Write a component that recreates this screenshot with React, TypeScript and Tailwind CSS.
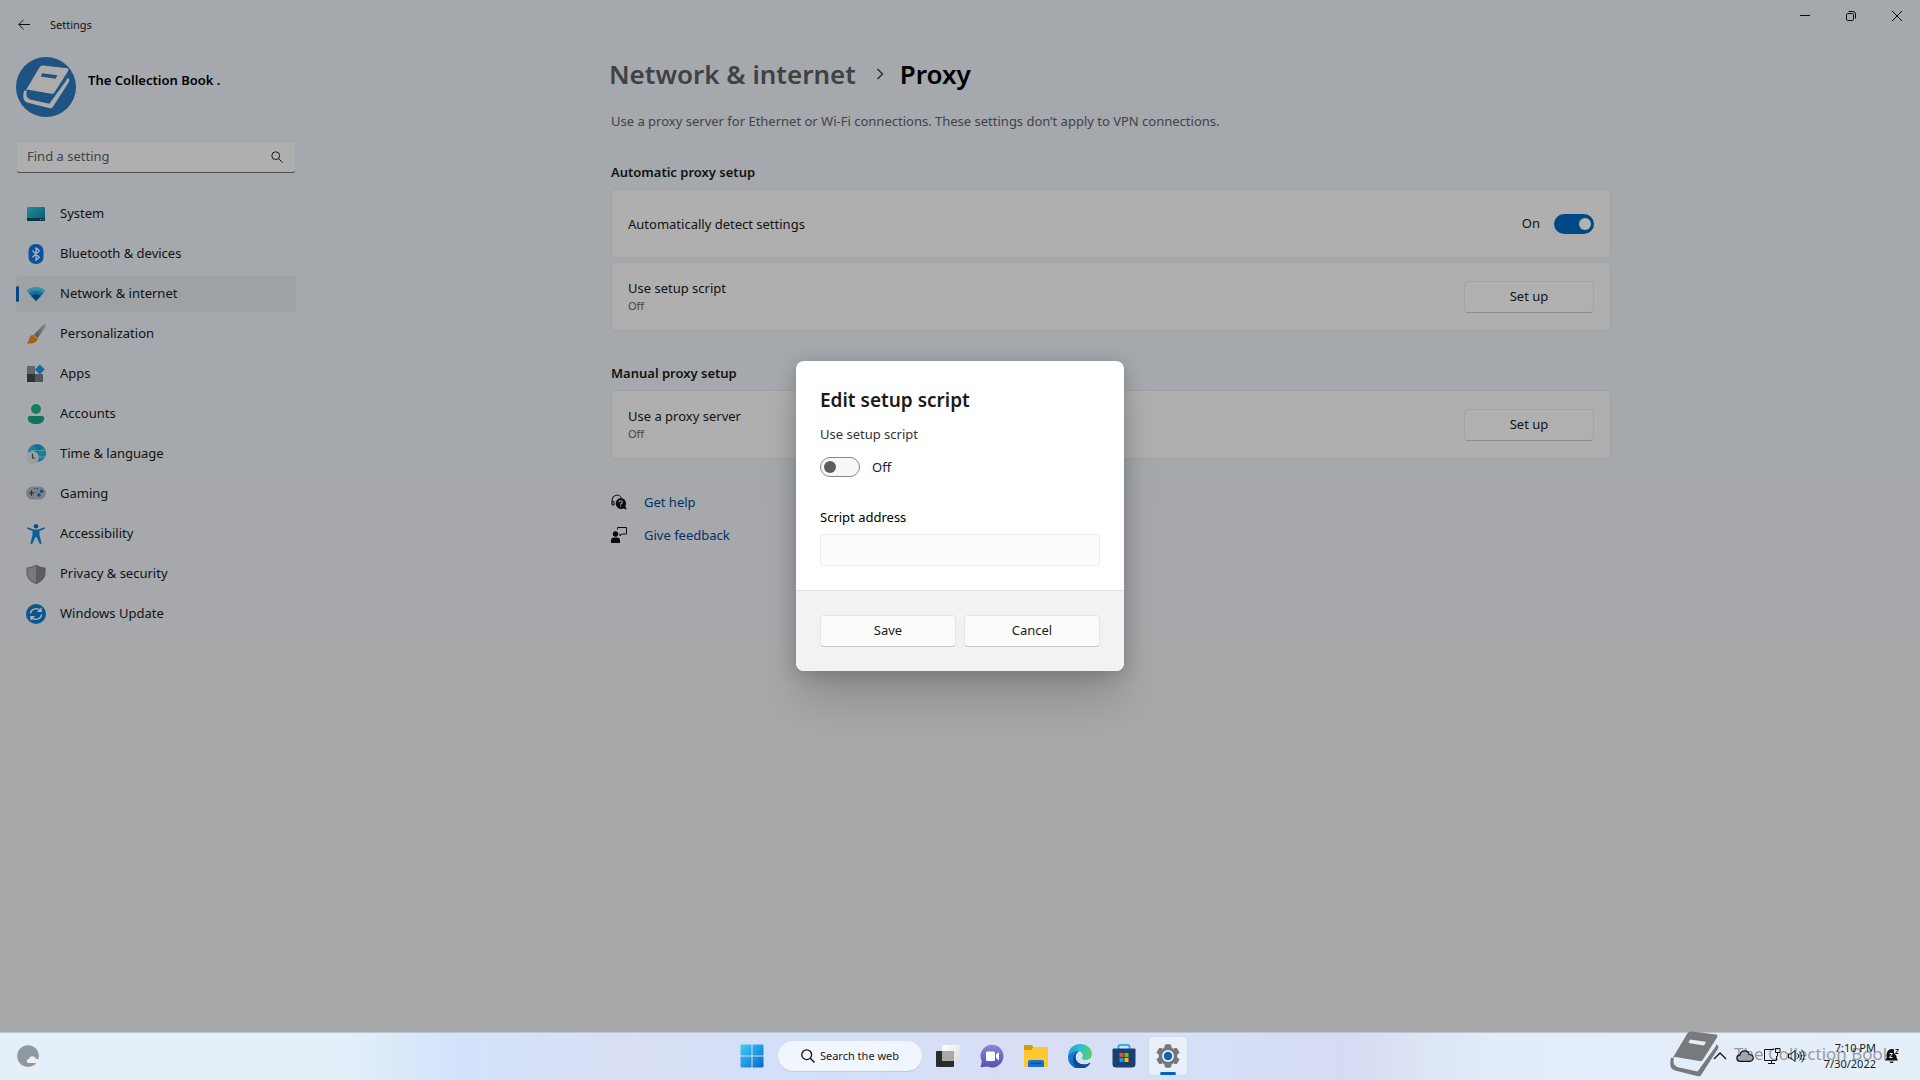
import { useState } from "react";
import type { ReactNode } from "react";

const SystemIcon = () => (
  <svg viewBox="0 0 20 20" className="size-5">
    <defs>
      <linearGradient id="sys" x1="0" y1="0" x2="1" y2="1">
        <stop offset="0" stopColor="#35c8dc" />
        <stop offset="1" stopColor="#0d7f9c" />
      </linearGradient>
    </defs>
    <rect x="1" y="3" width="18" height="14" rx="1.2" fill="url(#sys)" />
    <path d="M1 14h18v1.800a1.200 1.200 0 0 1-1.200 1.200H2.200A1.200 1.200 0 0 1 1 15.800z" fill="#0a4c68" />
    <path d="M14 15.500h1M16.500 15.500h1" stroke="#bfe8f2" strokeWidth="0.9" />
  </svg>
);

const BluetoothIcon = () => (
  <svg viewBox="0 0 20 20" className="size-5">
    <rect x="2.500" y="0" width="15" height="20" rx="7" fill="#0a78e6" />
    <path
      d="M6.300 6.600l7 6.600L10 16.200V3.800l3.300 3L6.300 13.400"
      fill="none"
      stroke="#fff"
      strokeWidth="1.300"
      strokeLinejoin="round"
    />
  </svg>
);

const NetworkIcon = () => (
  <svg viewBox="0 0 20 20" className="size-5">
    <path d="M0.300 6.800C5.800 1.700 14.200 1.700 19.700 6.800L10 17z" fill="#4cd0f0" />
    <path d="M2.800 9.400c4.100-3.800 10.300-3.800 14.400 0L10 17z" fill="#1a9fe0" />
    <path d="M5.300 12c2.700-2.400 6.700-2.400 9.400 0L10 17z" fill="#0a5ca8" />
  </svg>
);

const BrushIcon = () => (
  <svg viewBox="0 0 20 20" className="size-5">
    <defs>
      <linearGradient id="handle" x1="1" y1="0" x2="0" y2="1">
        <stop offset="0" stopColor="#c9ccd2" />
        <stop offset="1" stopColor="#6c7078" />
      </linearGradient>
    </defs>
    <path d="M19.600.4c.7.700.4 1.800-.2 2.800L11.600 14 8 10.800 17 .8c.9-.9 2-1 2.600-.4z" fill="url(#handle)" />
    <path d="M8 10.800l3.600 3.200c.2 3.600-4.200 6.600-10.900 5.200 2.200-1.300 1.800-3 2.800-5.400.8-2 2.700-3.200 4.500-3z" fill="#f08a1c" />
    <path d="M8 10.800l3.600 3.200-.5 1.500-4.500-4.300z" fill="#ffb84d" />
  </svg>
);

const AppsIcon = () => (
  <svg viewBox="0 0 20 20" className="size-5">
    <path d="M1 2h8v8H1z" fill="#8d9299" />
    <path d="M1 10h8v8H1z" fill="#43474d" />
    <path d="M9 10h8v8H9z" fill="#767b82" />
    <path d="M13.800.5l5 5-5 5-5-5z" fill="#1c9be0" />
  </svg>
);

const AccountsIcon = () => (
  <svg viewBox="0 0 20 20" className="size-5">
    <circle cx="10" cy="5" r="5" fill="#1db58d" />
    <path d="M4 12h12c1.400 0 2.200.8 2.200 2.200 0 3.500-3.400 5.800-8.200 5.800s-8.200-2.300-8.200-5.800C1.800 12.800 2.600 12 4 12z" fill="#17a583" />
  </svg>
);

const TimeIcon = () => (
  <svg viewBox="0 0 20 20" className="size-5">
    <circle cx="11" cy="9" r="9" fill="#1c9ed8" />
    <path d="M7 1c4 2 5 4 1 7H2.500C2 5 4 2 7 1zM12 8l5-5c3 3 4 7 1 12l-4 1z" fill="#33c3dc" opacity="0.700" />
    <path d="M5 6.500h14.500M12 13h7" stroke="#9be4f7" strokeWidth="0.700" />
    <circle cx="6.500" cy="13.500" r="6.500" fill="#e2e4e8" />
    <path d="M6.500 9.500v4.500h3" fill="none" stroke="#50545a" strokeWidth="1.200" />
  </svg>
);

const GamingIcon = () => (
  <svg viewBox="0 0 20 20" className="size-5">
    <rect x="0" y="2.500" width="20" height="13" rx="6.500" fill="#b5b9c2" />
    <path d="M5.500 6.200v5.600M2.700 9h5.600" stroke="#3b3e44" strokeWidth="1.200" />
    <circle cx="15.700" cy="7.200" r="1.700" fill="#1a6fc4" />
    <circle cx="13" cy="11" r="1.700" fill="#1a6fc4" />
    <path d="M8.300 4.500h1M11 4.500h1" stroke="#3b3e44" strokeWidth="1" />
  </svg>
);

const AccessibilityIcon = () => (
  <svg viewBox="0 0 20 20" className="size-5">
    <circle cx="10" cy="2.300" r="2.300" fill="#0b72c4" />
    <path
      d="M2.500 3.400l5 2.200h5l5-2.200c1.200-.4 1.700 1.200.7 1.700L13.500 7.300v4.200l2 7.200c.3 1.300-1.500 1.900-2 .6L10.500 13h-1l-3 6.300c-.6 1.300-2.300.7-2-.6l2-7.200V7.300L1.800 5.100c-1-.5-.5-2.100.7-1.700z"
      fill="#0f87dc"
    />
  </svg>
);

const PrivacyIcon = () => (
  <svg viewBox="0 0 20 20" className="size-5">
    <path d="M10 1c2.500 1.800 5.500 2.800 9 2.900V9c0 5-3.500 8.500-9 10.500z" fill="#82868d" />
    <path d="M10 1C7.500 2.800 4.500 3.800 1 3.900V9c0 5 3.500 8.500 9 10.500z" fill="#aaaeb5" />
    <path d="M10 1c2.500 1.800 5.500 2.800 9 2.900V9c0 5-3.500 8.500-9 10.500C4.500 17.500 1 14 1 9V3.900C4.500 3.800 7.500 2.800 10 1z" fill="none" stroke="#70747b" strokeWidth="0.900" />
  </svg>
);

const UpdateIcon = () => (
  <svg viewBox="0 0 20 20" className="size-5">
    <circle cx="10" cy="10" r="10" fill="#0c7fce" />
    <path
      d="M4.500 9.500c.5-5 7.500-6.500 10.500-2.500M15 3.800V7.200h-3.500M15.500 10.500c-.5 5-7.500 6.500-10.500 2.500M5 16.200v-3.400h3.500"
      fill="none"
      stroke="#fff"
      strokeWidth="1.400"
    />
  </svg>
);

const navItems: { label: string; icon: ReactNode }[] = [
  { label: "System", icon: <SystemIcon /> },
  { label: "Bluetooth & devices", icon: <BluetoothIcon /> },
  { label: "Network & internet", icon: <NetworkIcon /> },
  { label: "Personalization", icon: <BrushIcon /> },
  { label: "Apps", icon: <AppsIcon /> },
  { label: "Accounts", icon: <AccountsIcon /> },
  { label: "Time & language", icon: <TimeIcon /> },
  { label: "Gaming", icon: <GamingIcon /> },
  { label: "Accessibility", icon: <AccessibilityIcon /> },
  { label: "Privacy & security", icon: <PrivacyIcon /> },
  { label: "Windows Update", icon: <UpdateIcon /> },
];

const BookShape = ({ className }: { className: string }) => (
  <svg viewBox="0 0 50 46" className={className} fill="currentColor">
    <path
      fillRule="evenodd"
      d="M22.500 0.500L47 3.500c1.500.3 1.800 1.500 1 3L34 28.500c-.8 1.300-2 1.800-3.500 1.500L6.500 26c-1 0-2 .3-3 1.300L18 3C19 1 20.500.3 22.500.5zM21 8.500l-1.500 3.500 15.500 2.500 2-3.700z"
    />
    <path d="M47.500 13.500c2 1 2.500 2.500 1.300 4.500L32.500 43.500c-.8 1.500-2 2-3.500 1.800L6 39.500C1 38 .3 32.500 2.500 28.500c-.3 4 1.500 6.500 4.500 7.300l21.500 4.700L46 16.500z" />
    <path d="M3.500 27c-1.500 5 0 8.500 3.500 9.500" fill="none" stroke="currentColor" strokeWidth="3" />
  </svg>
);

const TitleBar = () => (
  <header className="flex h-[50px] items-center justify-between">
    <div className="flex items-center gap-5 pl-[18px]">
      <button type="button" aria-label="Back">
        <svg viewBox="0 0 12 12" className="size-3" fill="none" stroke="#1a1a1a">
          <path d="M12 5.500H.8M5.500.8L.8 5.500l4.700 4.700" />
        </svg>
      </button>
      <span className="text-[11px]">Settings</span>
    </div>
    <div className="flex self-start">
      <button type="button" aria-label="Minimize" className="flex h-8 w-[46px] items-center justify-center">
        <svg viewBox="0 0 10 10" className="size-[10px]" stroke="#111">
          <path d="M0 4.500h10" />
        </svg>
      </button>
      <button type="button" aria-label="Restore" className="flex h-8 w-[46px] items-center justify-center">
        <svg viewBox="0 0 10 10" className="size-[10px]" fill="none" stroke="#111">
          <rect x="0.500" y="2.500" width="7" height="7" rx="1.200" />
          <path d="M2.500.5H7A2.500 2.500 0 0 1 9.500 3v4.500" />
        </svg>
      </button>
      <button type="button" aria-label="Close" className="flex h-8 w-[46px] items-center justify-center">
        <svg viewBox="0 0 10 10" className="size-[10px]" stroke="#111">
          <path d="M0 0l10 10M10 0L0 10" />
        </svg>
      </button>
    </div>
  </header>
);

const Sidebar = () => (
  <aside className="w-[302px] shrink-0 pt-[7px] pr-1.5 pl-4">
    <div className="flex gap-3">
      <div className="flex size-[60px] items-center justify-center rounded-full bg-[#2d77bd] text-[#f7f7f7]">
        <BookShape className="h-[44px] w-[48px]" />
      </div>
      <span className="mt-[13px] text-[13px] leading-5 font-semibold text-black">The Collection Book .</span>
    </div>
    <div className="mt-6 flex h-8 items-center rounded border border-black/5 border-b-[#6b6d70] bg-[#fbfbfc] pr-3 pl-[10px]">
      <input
        type="text"
        aria-label="Find a setting"
        placeholder="Find a setting"
        className="min-w-0 flex-1 bg-transparent text-[13px] outline-none placeholder:text-[#5f6062]"
      />
      <svg viewBox="0 0 12 12" className="size-3" fill="none" stroke="#222">
        <circle cx="4.700" cy="4.700" r="3.900" />
        <path d="M7.500 7.500L11.500 11.500" />
      </svg>
    </div>
    <nav className="mt-[23px] flex flex-col gap-1">
      {navItems.map(({ label, icon }) => {
        const active = label === "Network & internet";
        return (
          <a
            key={label}
            href="#"
            aria-current={active ? "page" : undefined}
            className={`flex h-9 items-center rounded text-[13px] ${active ? "bg-black/[0.035]" : ""}`}
          >
            <span className={`h-4 w-[3px] rounded-full ${active ? "bg-[#0067c0]" : ""}`} />
            <span className="mr-[14px] ml-[7px]">{icon}</span>
            {label}
          </a>
        );
      })}
    </nav>
  </aside>
);

const Card = ({
  title,
  status,
  children,
}: {
  title: string;
  status?: string;
  children: ReactNode;
}) => (
  <div className="flex h-[69px] items-center justify-between rounded border border-black/[0.07] bg-[#fbfbfc] px-4">
    <div>
      <div className="text-[13px] leading-[18px]">{title}</div>
      {status && <div className="text-[11px] leading-[17px] text-[#5f6062]">{status}</div>}
    </div>
    {children}
  </div>
);

const SetupButton = () => (
  <button
    type="button"
    className="h-8 w-[130px] rounded border border-black/[0.07] border-b-black/20 bg-[#fdfdfe] text-[13px]"
  >
    Set up
  </button>
);

const Main = () => (
  <main className="flex-1 pt-1.5">
    <div className="mx-auto max-w-[1000px]">
      <h1 className="-ml-0.5 flex items-center text-[26px] leading-9 font-semibold">
        <span className="text-[#5c5e61]">Network &amp; internet</span>
        <svg viewBox="0 0 8 12" className="mr-4 ml-5 h-3 w-2" fill="none" stroke="#444" strokeWidth="1.500">
          <path d="M1.500 1l5 5-5 5" />
        </svg>
        <span className="text-black">Proxy</span>
      </h1>
      <p className="mt-[18px] text-[13px] leading-[22px] text-[#5f6164]">
        Use a proxy server for Ethernet or Wi-Fi connections. These settings don’t apply to VPN connections.
      </p>

      <h2 className="mt-[30px] mb-[7px] text-[13px] leading-5 font-semibold">Automatic proxy setup</h2>
      <div className="flex flex-col gap-1">
        <Card title="Automatically detect settings">
          <label className="flex items-center gap-[14px] text-[13px]">
            On
            <input
              type="checkbox"
              defaultChecked
              className="flex h-5 w-10 appearance-none items-center justify-end rounded-full bg-[#0067c0] px-[3px] before:size-3 before:rounded-full before:bg-white"
            />
          </label>
        </Card>
        <Card title="Use setup script" status="Off">
          <SetupButton />
        </Card>
      </div>

      <h2 className="mt-8 mb-[7px] text-[13px] leading-5 font-semibold">Manual proxy setup</h2>
      <Card title="Use a proxy server" status="Off">
        <SetupButton />
      </Card>

      <div className="mt-[33px] flex flex-col items-start gap-[13px] text-[13px] leading-5 text-[#00499c]">
        <a href="#" className="flex items-center gap-[17px]">
          <svg viewBox="0 0 16 16" className="size-4">
            <path d="M1 9.500V6a5 5 0 0 1 9.500-2M1 8.500v2.500h2V7.500H1" fill="none" stroke="#111" />
            <path d="M9.500 4a5.500 5.500 0 0 1 4.800 8.200l1.400 3.300-3.300-1A5.500 5.500 0 1 1 9.500 4z" fill="#111" />
            <path d="M8 8.300c0-2 3.200-2 3.200-.1 0 1.300-1.600 1.200-1.600 2.500M9.600 11.500v1" fill="none" stroke="#eef1f6" strokeWidth="1.100" />
          </svg>
          Get help
        </a>
        <a href="#" className="flex items-center gap-[17px]">
          <svg viewBox="0 0 16 16" className="size-4">
            <circle cx="4.500" cy="7" r="2.700" fill="#111" />
            <path d="M0 16v-2.500c0-2 1-3 3-3h3c2 0 3 1 3 3V16z" fill="#111" />
            <path d="M6.500 2.500V.5h9v6.500H11l-2 2V7H8.500" fill="none" stroke="#111" />
          </svg>
          Give feedback
        </a>
      </div>
    </div>
  </main>
);

const SetupScriptDialog = () => {
  const [enabled, setEnabled] = useState(false);
  const [address, setAddress] = useState("");

  return (
    <div
      role="dialog"
      aria-labelledby="dialog-title"
      className="w-[328px] overflow-hidden rounded-lg bg-white shadow-[0_32px_40px_-4px_rgba(0,0,0,0.16),0_2px_20px_rgba(0,0,0,0.2)]"
    >
      <div className="p-6">
        <h2 id="dialog-title" className="text-[19px] leading-[30px] font-semibold">
          Edit setup script
        </h2>
        <label htmlFor="use-script" className="mt-[9px] block text-[13px] leading-5 text-[#333]">
          Use setup script
        </label>
        <div className="mt-[13px] flex items-center gap-3 text-[13px] leading-5">
          <input
            id="use-script"
            type="checkbox"
            checked={enabled}
            onChange={(e) => setEnabled(e.target.checked)}
            className="flex h-5 w-10 appearance-none items-center rounded-full border border-[#868686] bg-[#f7f7f7] px-[3px] before:size-3 before:rounded-full before:bg-[#5d5d5d] checked:justify-end checked:bg-[#0067c0] checked:before:bg-white"
          />
          {enabled ? "On" : "Off"}
        </div>
        <label htmlFor="script-address" className="mt-[30px] block text-[13px] leading-5 text-black">
          Script address
        </label>
        <input
          id="script-address"
          type="text"
          value={address}
          onChange={(e) => setAddress(e.target.value)}
          className="mt-[7px] block h-8 w-full rounded border border-[#ececec] bg-[#fcfcfc] px-3 text-[13px]"
        />
      </div>
      <div className="grid grid-cols-2 gap-2 border-t border-[#e2e2e2] bg-[#f2f2f2] p-6 text-[13px]">
        <button type="button" className="h-8 rounded border border-[#e3e3e3] border-b-[#c8c8c8] bg-[#fcfcfc]">
          Save
        </button>
        <button type="button" className="h-8 rounded border border-[#e3e3e3] border-b-[#c8c8c8] bg-[#fcfcfc]">
          Cancel
        </button>
      </div>
    </div>
  );
};

const StartIcon = () => (
  <svg viewBox="0 0 24 24" className="size-6">
    <defs>
      <linearGradient id="win" x1="0" y1="0" x2="24" y2="24" gradientUnits="userSpaceOnUse">
        <stop offset="0" stopColor="#45d0f8" />
        <stop offset="1" stopColor="#0067c8" />
      </linearGradient>
    </defs>
    <path d="M.5 1.500a1 1 0 0 1 1-1h10v11H.5zM12.500.5h10a1 1 0 0 1 1 1v10h-11zM.5 12.500h11v11h-10a1 1 0 0 1-1-1zM12.500 12.500h11v10a1 1 0 0 1-1 1h-10z" fill="url(#win)" />
  </svg>
);

const TaskViewIcon = () => (
  <svg viewBox="0 0 24 24" className="size-6">
    <defs>
      <linearGradient id="pane" x1="0" y1="0" x2="1" y2="1">
        <stop offset="0" stopColor="#ffffff" />
        <stop offset="1" stopColor="#dcdcdc" />
      </linearGradient>
    </defs>
    <rect x="6" y="1" width="18" height="16" rx="1" fill="url(#pane)" />
    <rect x="0" y="7" width="18" height="16" rx="1" fill="#2b2b2b" />
    <path d="M6 7h12v10H6z" fill="#a9a9a9" />
  </svg>
);

const ChatIcon = () => (
  <svg viewBox="0 0 24 24" className="size-6">
    <defs>
      <linearGradient id="chat" x1="0" y1="0" x2="0" y2="1">
        <stop offset="0" stopColor="#8a86d8" />
        <stop offset="1" stopColor="#5551b5" />
      </linearGradient>
    </defs>
    <path d="M12 .8a11.300 11.300 0 1 1-4.500 21.600L1.500 23.300c-.6.100-1-.4-.8-1l1.200-4.800A11.300 11.300 0 0 1 12 .8z" fill="url(#chat)" />
    <rect x="6" y="7.500" width="9" height="9.500" rx="1.500" fill="#fff" />
    <path d="M16 10.500l3-2.500v8.500l-3-2.500z" fill="#fff" />
  </svg>
);

const ExplorerIcon = () => (
  <svg viewBox="0 0 24 24" className="size-6">
    <path d="M0 2a1 1 0 0 1 1-1h6.500L10 3.500V7H0z" fill="#d8980c" />
    <path d="M9.500 3H23a1 1 0 0 1 1 1v18a1 1 0 0 1-1 1H1a1 1 0 0 1-1-1V6h7z" fill="#fcc934" />
    <path d="M4 23v-5a2 2 0 0 1 2-2h12a2 2 0 0 1 2 2v5z" fill="#1673c8" />
    <path d="M7 19.500h10" stroke="#0a4e96" strokeWidth="1.300" strokeLinecap="round" />
  </svg>
);

const EdgeIcon = () => (
  <svg viewBox="0 0 24 24" className="size-6">
    <defs>
      <linearGradient id="edgeTop" x1="0" y1="0.300" x2="1" y2="0.500">
        <stop offset="0" stopColor="#1d9fe6" />
        <stop offset="0.500" stopColor="#2cc0c8" />
        <stop offset="1" stopColor="#58d364" />
      </linearGradient>
      <linearGradient id="edgeLow" x1="0" y1="0" x2="1" y2="1">
        <stop offset="0" stopColor="#1588d8" />
        <stop offset="1" stopColor="#0b4f9c" />
      </linearGradient>
    </defs>
    <path d="M.1 11.500C.5 5 5.500 0 12 0c6.800 0 12 4.500 12 10 0 3.800-3 6-6.200 6-2.600 0-3.900-.9-3.900-1.700 0-.7 1-1.200 1-3 0-2.400-2.400-4.300-5.900-4.300C5 7 1.500 8.500.1 11.500z" fill="url(#edgeTop)" />
    <path d="M.1 11.500C1.300 8.500 5 7 8.500 7c1 0 2 .2 3 .6-2.600.6-4 2.900-4 5.400 0 4.500 4 7.500 8.500 7.500 2 0 3.800-.5 5.500-1.600.5-.3.900.2.600.7A12 12 0 0 1 .1 11.500z" fill="url(#edgeLow)" />
    <path d="M7.500 13c0 4.500 4 7.500 8.500 7.500 2 0 3.800-.5 5.500-1.600.5-.3.900.2.600.7A12 12 0 0 1 12 24c-4.500-1-7-4.500-7-8 0-4 3-8 6.500-8.400-2.600.8-4 2.900-4 5.400z" fill="#0c4a94" />
  </svg>
);

const StoreIcon = () => (
  <svg viewBox="0 0 24 24" className="size-6">
    <path d="M6.500 5V2.500A1.500 1.500 0 0 1 8 1h8a1.500 1.500 0 0 1 1.500 1.500V5" fill="none" stroke="#2cb5ea" strokeWidth="2" />
    <path d="M.5 5.500a1 1 0 0 1 1-1h21a1 1 0 0 1 1 1V20a3.500 3.500 0 0 1-3.500 3.500H4A3.500 3.500 0 0 1 .5 20z" fill="#1b3f73" />
    <path d="M7.500 9h4v4h-4z" fill="#f25022" />
    <path d="M12.500 9h4v4h-4z" fill="#7fba00" />
    <path d="M7.500 14h4v4h-4z" fill="#00a4ef" />
    <path d="M12.500 14h4v4h-4z" fill="#ffb900" />
  </svg>
);

const GearIcon = () => (
  <svg viewBox="0 0 24 24" className="size-6">
    <path
      d="M9.500 0.800h5l.8 3.200 2 1.200 3.200-1 2.500 4.300L20.600 11v2l2.400 2.500-2.500 4.300-3.200-1-2 1.200-.8 3.200h-5l-.8-3.200-2-1.200-3.200 1L1 15.500 3.400 13v-2L1 8.500l2.500-4.300 3.200 1 2-1.200z"
      fill="#74777b"
      stroke="#74777b"
      strokeLinejoin="round"
    />
    <circle cx="12" cy="12" r="6" fill="#e9eef8" />
    <circle cx="12" cy="12" r="4.200" fill="#0f62b4" />
  </svg>
);

const taskbarApps: { label: string; icon: ReactNode }[] = [
  { label: "Task view", icon: <TaskViewIcon /> },
  { label: "Chat", icon: <ChatIcon /> },
  { label: "File Explorer", icon: <ExplorerIcon /> },
  { label: "Microsoft Edge", icon: <EdgeIcon /> },
  { label: "Microsoft Store", icon: <StoreIcon /> },
];

const Watermark = () => (
  <div className="pointer-events-none absolute top-0 right-0 flex h-11 w-[251px] items-center gap-[15px] text-[#77797c]">
    <BookShape className="h-[46px] w-[50px] shrink-0" />
    <span className="text-[17px] leading-6 whitespace-nowrap opacity-70">The Collection Book</span>
  </div>
);

const Tray = () => (
  <div className="relative flex items-center pr-5">
    <button type="button" aria-label="Show hidden icons" className="mr-[9px]">
      <svg viewBox="0 0 14 8" className="h-2 w-[14px]" fill="none" stroke="#111" strokeWidth="1.300">
        <path d="M1 7l6-6 6 6" />
      </svg>
    </button>
    <svg viewBox="0 0 18 12" className="mr-[10px] h-3 w-[18px]" fill="#a3a5a8" stroke="#111" strokeWidth="1.200">
      <path d="M4.500 11.300C-.3 11.300-.2 5.500 3.800 5.200 5-.5 12-.5 13 4.500c5.500-.3 5.500 6.800.8 6.800z" />
    </svg>
    <svg viewBox="0 0 17 16" className="mr-[7px] h-4 w-[17px]" fill="none" stroke="#111">
      <path d="M10 1.500H.5v11h12V8M4 15.500h7M7.500 12.500v3M11.500.5h4.500v4h-4.500zM13.500 4.500v4" />
    </svg>
    <svg viewBox="0 0 17 14" className="mr-[7px] h-[14px] w-[17px]" fill="none" stroke="#111">
      <path d="M.5 5v4h2.500l4 3.500v-11L3 5zM9.500 4.500c1.300 1.500 1.300 3.500 0 5" />
      <path d="M11.500 2.500c2.500 2.500 2.500 6.500 0 9M13.500.7c3.500 3.500 3.500 9 0 12.600" />
    </svg>
    <div className="mr-2 w-[64px] text-right text-[11px] leading-4 whitespace-nowrap">
      <div>7:10 PM</div>
      <div>7/30/2022</div>
    </div>
    <svg viewBox="0 0 16 16" className="size-4">
      <path d="M7 1C4 1.500 2.700 4 2.700 6.500v3.300L1 12.500h13l-1.500-2.700V8L10 5V1.500C9 1 8 .9 7 1zM5.500 13.500a2.200 2.200 0 0 0 4.200 0z" fill="#111" />
      <path d="M5.500 5.500h3l-3 4h3" fill="none" stroke="#e3eef9" />
      <path d="M11.500 1.500h3l-3 4h3" fill="none" stroke="#111" />
    </svg>
  </div>
);

const Taskbar = () => (
  <footer className="relative grid h-12 shrink-0 grid-cols-[1fr_auto_1fr] items-center bg-[linear-gradient(90deg,#e3eff9_0%,#e3eff9_18%,#d3e2fb_24%,#d9dff4_33%,#d3e0fa_42%,#d9def3_55%,#d5e0f8_62%,#d5dbf2_70%,#e3edf9_78%,#e3eff9_100%)] shadow-[inset_0_1px_0_#bcc4d0]">
    <Watermark />
    <button type="button" aria-label="Weather" className="ml-[17px] justify-self-start">
      <svg viewBox="0 0 23 22" className="h-[22px] w-[23px]">
        <circle cx="11" cy="11" r="10.800" fill="#8f999f" />
        <path d="M12 18c-3 0-3-4 0-4 .5-3.500 6-3.500 6.500-.5 4 0 4 4.500 1 4.500z" fill="#eef0f2" />
      </svg>
    </button>
    <div className="flex items-center">
      <button type="button" aria-label="Start" className="flex w-11 justify-center">
        <StartIcon />
      </button>
      <button
        type="button"
        className="mx-1 flex h-[30px] w-[144px] items-center justify-center gap-[5px] rounded-full bg-[#f1f5fd] text-[11px] shadow-[0_1px_1px_rgba(0,0,0,0.1)]"
      >
        <svg viewBox="0 0 14 14" className="size-[14px]" fill="none" stroke="#111" strokeWidth="1.300">
          <circle cx="5.700" cy="5.700" r="4.900" />
          <path d="M9.300 9.300L13.500 13.500" />
        </svg>
        Search the web
      </button>
      {taskbarApps.map(({ label, icon }) => (
        <button key={label} type="button" aria-label={label} className="flex w-11 justify-center">
          {icon}
        </button>
      ))}
      <button
        type="button"
        aria-label="Settings"
        className="relative mx-[3px] flex size-[38px] items-center justify-center rounded bg-[#eaf0fa] shadow-[0_0_1px_rgba(0,0,0,0.2)]"
      >
        <GearIcon />
        <span className="absolute bottom-0 left-[11px] h-[3px] w-4 rounded-full bg-[#0067c0]" />
      </button>
    </div>
    <div className="justify-self-end">
      <Tray />
    </div>
  </footer>
);

export default function App() {
  return (
    <div className="flex h-screen flex-col overflow-hidden font-['Noto_Sans','Open_Sans',sans-serif] text-[#1a1a1a]">
      <div className="relative flex-1 bg-linear-to-b from-[#ecf1f8] to-[#f0f1f3]">
        <TitleBar />
        <div className="flex">
          <Sidebar />
          <Main />
        </div>
        <div className="absolute inset-0 flex items-center justify-center bg-black/30">
          <SetupScriptDialog />
        </div>
      </div>
      <Taskbar />
    </div>
  );
}
